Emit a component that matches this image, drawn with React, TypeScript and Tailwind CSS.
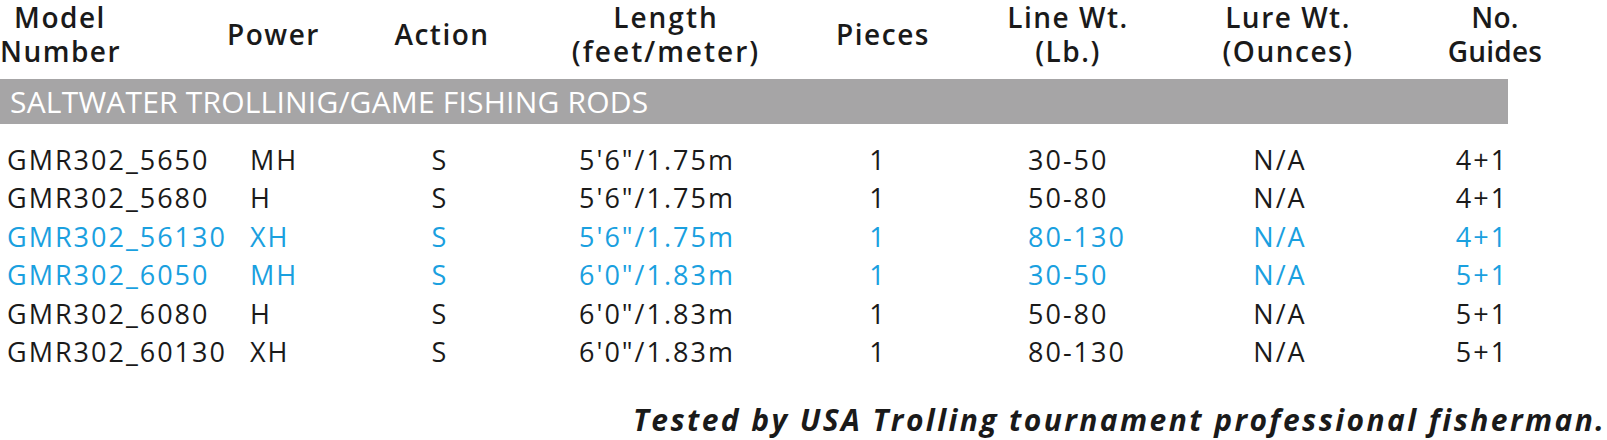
const rows = [
  { model: "GMR302_5650", power: "MH", action: "S", length: `5'6"/1.75m`, pieces: "1", line: "30-50", lure: "N/A", guides: "4+1", hot: false },
  { model: "GMR302_5680", power: "H", action: "S", length: `5'6"/1.75m`, pieces: "1", line: "50-80", lure: "N/A", guides: "4+1", hot: false },
  { model: "GMR302_56130", power: "XH", action: "S", length: `5'6"/1.75m`, pieces: "1", line: "80-130", lure: "N/A", guides: "4+1", hot: true },
  { model: "GMR302_6050", power: "MH", action: "S", length: `6'0"/1.83m`, pieces: "1", line: "30-50", lure: "N/A", guides: "5+1", hot: true },
  { model: "GMR302_6080", power: "H", action: "S", length: `6'0"/1.83m`, pieces: "1", line: "50-80", lure: "N/A", guides: "5+1", hot: false },
  { model: "GMR302_60130", power: "XH", action: "S", length: `6'0"/1.83m`, pieces: "1", line: "80-130", lure: "N/A", guides: "5+1", hot: false },
]

const cols = "grid grid-cols-[230px_100px_220px_220px_220px_150px_280px_150px]"

export default function App() {
  return (
    <div className="w-[1607px] h-[440px] bg-white overflow-hidden text-[#1a1a1a] font-['Open_Sans',sans-serif]">
      {/* header */}
      <div className={`${cols} h-[79px] pb-[18px] items-center text-[28px] font-semibold leading-[34px] tracking-[1.5px]`}>
        <div className="w-[120px] text-center">Model<br />Number</div>
        <div className="-ml-[3px]">Power</div>
        <div className="text-center pl-[4px]">Action</div>
        <div className="text-center pl-[12px] tracking-[2px]">Length<br />(feet/meter)</div>
        <div className="text-center pl-[6px]">Pieces</div>
        <div className="text-center pl-[6px]">Line Wt.<br />(Lb.)</div>
        <div className="text-center pl-[16px]">Lure Wt.<br />(Ounces)</div>
        <div className="text-center tracking-[0.2px]">No.<br />Guides</div>
      </div>

      <div className="w-[1508px] h-[45px] bg-[#a6a5a6] text-white text-[30px] font-normal tracking-[0.2px] leading-[45px] pl-[10px] whitespace-nowrap">
        SALTWATER TROLLINIG/GAME FISHING RODS
      </div>

      {/* rows */}
      <div className="mt-[17px]">
        {rows.map((r) => (
          <div
            key={r.model}
            className={`${cols} h-[38.4px] leading-[38px] text-[27px] tracking-[2px] ${r.hot ? "text-[#1aa0df]" : "text-[#1a1a1a]"}`}
          >
            <div className="pl-[7px]">{r.model}</div>
            <div className="pl-[20px]">{r.power}</div>
            <div className="text-center">{r.action}</div>
            <div className="text-center -ml-[6px]">{r.length}</div>
            <div className="text-center -ml-[4px]">{r.pieces}</div>
            <div className="pl-[38px]">{r.line}</div>
            <div className="text-center">{r.lure}</div>
            <div className="text-center -ml-[26px]">{r.guides}</div>
          </div>
        ))}
      </div>

      <div className="mt-[30px] pl-[633px] whitespace-nowrap text-[30px] leading-[38px] font-bold italic tracking-[2.4px]">
        Tested by USA Trolling tournament professional fisherman.
      </div>
    </div>
  )
}
